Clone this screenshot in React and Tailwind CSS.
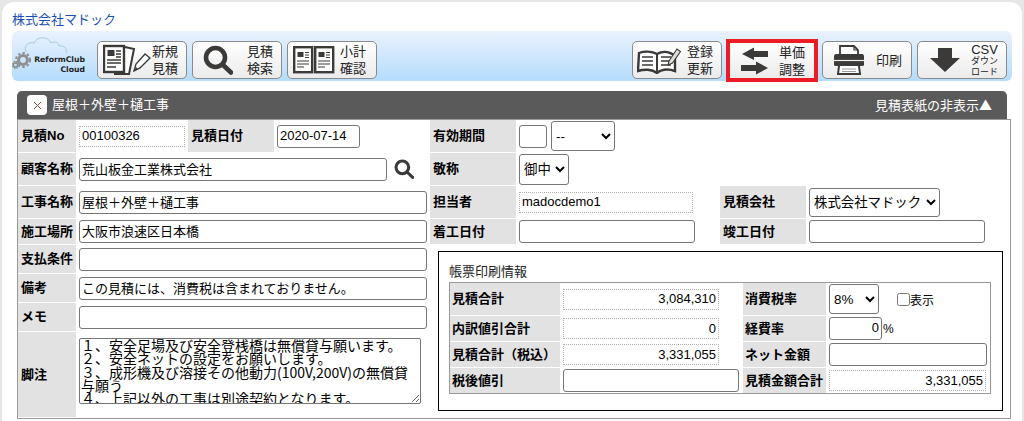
const ink = "#3b3a38";

function LogoMark() {
  return (
    <svg width="85" height="50" viewBox="0 0 85 50" className="shrink-0">
      <path d="M14 21 C11 15 17 10 22 12 C25 5 36 5 39 12 C42 10 47 11 47 15 C51 14 56 17 54 22" fill="none" stroke="#a9cbe0" strokeWidth="1" />
      <g fill="none" stroke="#8f8f8f">
        <circle cx="11" cy="29" r="4.4" strokeWidth="3" />
        <circle cx="11" cy="29" r="7" strokeWidth="2" strokeDasharray="2.4 2.2" />
        <circle cx="3.5" cy="34" r="2.2" strokeWidth="1.8" />
        <circle cx="3.5" cy="34" r="3.6" strokeWidth="1.2" strokeDasharray="1.4 1.5" />
      </g>
      <text x="73" y="30.5" textAnchor="end" fontFamily="'DejaVu Sans',sans-serif" fontWeight="700" fontSize="7.7" fill="#222">ReformClub</text>
      <text x="73" y="40.5" textAnchor="end" fontFamily="'DejaVu Sans',sans-serif" fontWeight="700" fontSize="7.7" fill="#222">Cloud</text>
    </svg>
  );
}

function DocIcon() {
  return (
    <svg width="48" height="32" viewBox="0 0 48 32" className="shrink-0">
      <path d="M22 3 L31 5 L26 30 L11 30" fill="#fff" stroke={ink} strokeWidth="2" />
      <rect x="1" y="2" width="20" height="26" fill="#fff" stroke={ink} strokeWidth="2.4" />
      <rect x="4.5" y="6" width="7" height="6" fill={ink} />
      <path d="M13 7h5M13 10h5M13 13h5M4 16h14M4 19h14M4 23h9" stroke={ink} strokeWidth="1.3" />
      <path d="M31 27 L33 20 L42 10 L47 14 L37 24 Z" fill="#fff" stroke={ink} strokeWidth="1.4" />
      <path d="M31 27 L33 23 L35 25 Z" fill={ink} />
    </svg>
  );
}

function SearchIcon({ size = 30 }) {
  return (
    <svg width={size} height={size} viewBox="0 0 30 30" className="shrink-0">
      <circle cx="12.5" cy="12.5" r="9.5" fill="none" stroke={ink} strokeWidth="4.6" />
      <path d="M19.5 19.5 L28 27.5" stroke={ink} strokeWidth="4.6" strokeLinecap="round" />
    </svg>
  );
}

function TwoDocs() {
  const page = (x) => (
    <g key={x}>
      <rect x={x + 1.2} y="1.2" width="18" height="25" fill="#fff" stroke={ink} strokeWidth="2.4" />
      <rect x={x + 4.5} y="6" width="6" height="5" fill={ink} />
      <path d={`M${x + 12} 6.5h4M${x + 12} 9h4M${x + 12} 11.5h4M${x + 4} 15h12M${x + 4} 18h12M${x + 4} 21h7`} stroke={ink} strokeWidth="1.2" />
    </g>
  );
  return (
    <svg width="42" height="28" viewBox="0 0 42 28" className="shrink-0">
      {page(0)}
      {page(21)}
    </svg>
  );
}

function BookIcon() {
  return (
    <svg width="44" height="27" viewBox="0 0 44 27" className="shrink-0">
      <path d="M20 7 C15 4 7 4 2 6 L1 24 C7 22 15 22 20 26 C25 22 32 22 38 24 L38 9 C32 4 25 4 20 7 Z" fill="#fff" stroke={ink} strokeWidth="2.4" />
      <path d="M20 7 V26" stroke={ink} strokeWidth="2" />
      <path d="M5 10h11M5 14h11M5 18h11M24 10h10M24 14h10M24 18h10" stroke={ink} strokeWidth="1.7" />
      <path d="M32 14 L40 2 L43.5 4.5 L35.5 16 L31 18 Z" fill="#ddd" stroke={ink} strokeWidth="1.1" />
    </svg>
  );
}

function ArrowsIcon() {
  return (
    <svg width="28" height="28" viewBox="0 0 28 28" className="shrink-0">
      <path d="M27 4 H13 V0.5 L1 7 L13 13 V10 H27 Z" fill={ink} />
      <path d="M0 18 H15 V14.5 L27 21 L15 27.5 V24 H0 Z" fill={ink} />
    </svg>
  );
}

function PrinterIcon() {
  return (
    <svg width="32" height="30" viewBox="0 0 32 30" className="shrink-0">
      <path d="M7 10 V1 H21 L25 5 V10 Z" fill="#fff" stroke={ink} strokeWidth="1.8" />
      <path d="M21 1 V5 H25" fill="none" stroke={ink} strokeWidth="1.2" />
      <path d="M3 9 H29 Q31 9 31 12 V20 Q31 21 29 21 H3 Q1 21 1 20 V12 Q1 9 3 9 Z" fill={ink} />
      <path d="M1 15.5 H31" stroke="#eee" strokeWidth="1.2" />
      <path d="M6 21 L5 29 H27 L26 21" fill="#fff" stroke={ink} strokeWidth="2" />
      <path d="M9 24h14M9 26.5h14" stroke="#999" strokeWidth="1.2" />
    </svg>
  );
}

function DownIcon() {
  return (
    <svg width="30" height="24" viewBox="0 0 30 24" className="shrink-0">
      <path d="M8 0 H22 V10 H30 L15 24 L0 10 H8 Z" fill={ink} />
    </svg>
  );
}

function ToolBtn({ icon, lines, children, className = "" }) {
  return (
    <div className={`h-[38px] w-[90px] shrink-0 flex items-center justify-between rounded-[5px] border border-[#8a8a8a] bg-gradient-to-b from-white to-[#ebebeb] text-[13px] leading-[17px] text-[#222] ${className}`}>
      {icon}
      {children || (
        <div className="flex flex-col items-center">
          {lines.map((l) => <span key={l}>{l}</span>)}
        </div>
      )}
    </div>
  );
}

const inputCls = "block h-[23px] shrink-0 border border-[#767676] rounded-[3px] bg-white px-[2px] pb-[2px] text-[13px] text-black outline-none";
const readCls = "block h-[21px] shrink-0 border border-dotted border-[#b0b0b0] bg-white px-[2px] pb-[1px] text-[13px] text-black outline-none";
const selCls = "block shrink-0 border border-[#767676] rounded-[3px] bg-white text-[13.4px] text-black";

function Label({ w, children, className = "" }) {
  return (
    <div className={`${w} shrink-0 self-stretch flex items-center whitespace-nowrap bg-[#e2e2e2] text-[13px] font-bold text-black ${className}`}>
      {children}
    </div>
  );
}

function Row({ h, children }) {
  return <div className={`${h} flex items-center gap-[3px]`}>{children}</div>;
}

export default function App() {
  return (
    <div className="w-[1024px] h-[421px] overflow-hidden bg-[#e6e6e6] pt-[2px] px-[2px] font-['Liberation_Sans','Noto_Sans_CJK_JP',sans-serif]">
      <div className="h-full bg-white rounded-t-[12px] pl-[10px] pr-[10px]">
        <div className="h-[29px] pt-[9px] text-[13px] leading-[18px] text-[#1a50b4]">株式会社マドック</div>

        <div className="w-[1000px] h-[50px] flex items-start rounded-[6px] bg-gradient-to-b from-[#eaf2fd] to-[#b4dcfb]">
          <LogoMark />
          <div className="flex pt-[10px] gap-[5px]">
            <ToolBtn icon={<span className="ml-[5px]"><DocIcon /></span>} lines={["新規", "見積"]} className="pr-[8px]" />
            <ToolBtn icon={<span className="ml-[10px]"><SearchIcon /></span>} lines={["見積", "検索"]} className="pr-[8px]" />
            <ToolBtn icon={<span className="ml-[5px]"><TwoDocs /></span>} lines={["小計", "確認"]} className="pr-[10px]" />
          </div>
          <div className="flex-1" />
          <div className="flex pt-[8px] items-start">
            <div className="mt-[2px] mr-[4px]">
              <ToolBtn icon={<span className="ml-[4px]"><BookIcon /></span>} lines={["登録", "更新"]} className="pr-[8px]" />
            </div>
            <div className="w-[92px] h-[43px] shrink-0 border-[4px] border-[#ed1c24] flex items-center justify-between bg-gradient-to-b from-white to-[#ebebeb] pl-[11px] pr-[9px] text-[13px] leading-[17px] text-[#222]">
              <ArrowsIcon />
              <div className="flex flex-col items-center"><span>単価</span><span>調整</span></div>
            </div>
            <div className="mt-[2px] ml-[4px] mr-[5px] flex gap-[5px]">
              <ToolBtn icon={<span className="ml-[10px]"><PrinterIcon /></span>} lines={["印刷"]} className="pr-[9px]" />
              <ToolBtn icon={<span className="ml-[12px]"><DownIcon /></span>} className="pr-[8px]">
                <div className="flex flex-col items-center">
                  <span className="text-[13px] leading-[13px]">CSV</span>
                  <span className="text-[9px] leading-[11px]">ダウン</span>
                  <span className="text-[9px] leading-[10px]">ロード</span>
                </div>
              </ToolBtn>
            </div>
          </div>
        </div>

        <div className="ml-[5px] mt-[10px] w-[990px] h-[28px] flex items-center rounded-t-[5px] bg-[#5a5a5a] text-[13px] text-white">
          <div className="ml-[10px] mr-[5px] w-[20px] h-[20px] rounded-[4px] bg-white flex items-center justify-center">
            <svg width="9" height="9" viewBox="0 0 9 9"><path d="M1 1 L8 8 M8 1 L1 8" stroke="#7a4a3a" strokeWidth="1" /></svg>
          </div>
          <span>屋根＋外壁＋樋工事</span>
          <span className="ml-auto mr-[15px]">見積表紙の非表示<span className="font-['Noto_Sans_CJK_JP',sans-serif]">▲</span></span>
        </div>

        <div className="ml-[5px] w-[994px] h-[300px] border border-[#999] flex gap-[2px] bg-white">
          <div className="w-[410px] shrink-0 flex flex-col gap-[1px]">
            <Row h="h-[32px]">
              <Label w="w-[58px]" className="pl-[3px]">見積No</Label>
              <input readOnly defaultValue="00100326" className={`${readCls} w-[106px]`} />
              <Label w="w-[86px]" className="pl-[3px]">見積日付</Label>
              <input defaultValue="2020-07-14" className={`${inputCls} w-[83px]`} />
            </Row>
            <Row h="h-[32px]">
              <Label w="w-[58px]" className="pl-[3px]">顧客名称</Label>
              <input defaultValue="荒山板金工業株式会社" className={`${inputCls} w-[308px]`} />
              <span className="ml-[4px]"><SearchIcon size={20} /></span>
            </Row>
            <Row h="h-[32px]">
              <Label w="w-[58px]" className="pl-[3px]">工事名称</Label>
              <input defaultValue="屋根＋外壁＋樋工事" className={`${inputCls} w-[348px]`} />
            </Row>
            <Row h="h-[25px]">
              <Label w="w-[58px]" className="pl-[3px]">施工場所</Label>
              <input defaultValue="大阪市浪速区日本橋" className={`${inputCls} w-[348px]`} />
            </Row>
            <Row h="h-[28px]">
              <Label w="w-[58px]" className="pl-[3px]">支払条件</Label>
              <input className={`${inputCls} w-[348px]`} />
            </Row>
            <Row h="h-[28px]">
              <Label w="w-[58px]" className="pl-[3px]">備考</Label>
              <input defaultValue="この見積には、消費税は含まれておりません。" className={`${inputCls} w-[348px]`} />
            </Row>
            <Row h="h-[28px]">
              <Label w="w-[58px]" className="pl-[3px]">メモ</Label>
              <input className={`${inputCls} w-[348px]`} />
            </Row>
            <Row h="h-[85px]">
              <Label w="w-[58px]" className="pl-[3px]">脚注</Label>
              <textarea
                className="block w-[342px] h-[66px] -mt-[7px] shrink-0 overflow-hidden border border-[#767676] rounded-[2px] bg-white px-[1px] py-0 text-[14px] leading-[13.3px] text-black outline-none font-['Liberation_Sans_Narrow','Noto_Sans_CJK_JP',sans-serif]"
                defaultValue={"１、安全足場及び安全登桟橋は無償貸与願います。\n２、安全ネットの設定をお願いします。\n３、成形機及び溶接その他動力(100V,200V)の無償貸\n与願う\n４、上記以外の工事は別途契約となります。"}
              />
            </Row>
          </div>

          <div className="flex-1 flex flex-col gap-[1px]">
            <Row h="h-[32px]">
              <Label w="w-[86px]" className="pl-[3px]">有効期間</Label>
              <input className={`${inputCls} w-[28px]`} />
              <select defaultValue="--" className={`${selCls} ml-[1px] w-[64px] h-[30px]`}><option>--</option></select>
            </Row>
            <Row h="h-[32px]">
              <Label w="w-[86px]" className="pl-[3px]">敬称</Label>
              <select className={`${selCls} w-[50px] h-[31px]`}><option>御中</option></select>
            </Row>
            <Row h="h-[32px]">
              <Label w="w-[86px]" className="pl-[3px]">担当者</Label>
              <input readOnly defaultValue="madocdemo1" className={`${readCls} w-[174px]`} />
              <Label w="w-[86px]" className="ml-[24px] pl-[3px]">見積会社</Label>
              <select className={`${selCls} w-[131px] h-[29px]`}><option>株式会社マドック</option></select>
            </Row>
            <Row h="h-[25px]">
              <Label w="w-[86px]" className="pl-[3px]">着工日付</Label>
              <input className={`${inputCls} w-[176px]`} />
              <Label w="w-[86px]" className="ml-[22px] pl-[3px]">竣工日付</Label>
              <input className={`${inputCls} w-[176px]`} />
            </Row>

            <div className="mt-[6px] ml-[8px] w-[565px] h-[160px] border border-black pl-[10px] pt-[10px]">
              <div className="h-[20px] text-[13px] leading-[20px] text-[#222]">帳票印刷情報</div>
              <div className="w-[542px] border border-[#999] flex flex-col gap-[1px]">
                <div className="h-[32px] flex items-center">
                  <Label w="w-[110px]" className="pl-[2px]">見積合計</Label>
                  <div className="w-[183px] shrink-0 pl-[3px]"><input readOnly defaultValue="3,084,310" className={`${readCls} w-[156px] text-right`} /></div>
                  <Label w="w-[83px]" className="pl-[2px]">消費税率</Label>
                  <select className={`${selCls} ml-[3px] w-[50px] h-[30px]`}><option>8%</option></select>
                  <input type="checkbox" className="ml-[18px] w-[13px] h-[13px] shrink-0" />
                  <span className="text-[12px] pt-[3px]">表示</span>
                </div>
                <div className="h-[25px] flex items-center">
                  <Label w="w-[110px]" className="pl-[2px]">内訳値引合計</Label>
                  <div className="w-[183px] shrink-0 pl-[3px]"><input readOnly defaultValue="0" className={`${readCls} w-[156px] text-right`} /></div>
                  <Label w="w-[83px]" className="pl-[2px]">経費率</Label>
                  <input defaultValue="0" className={`${inputCls} ml-[3px] w-[53px] text-right`} />
                  <span className="ml-[1px] text-[12px]">%</span>
                </div>
                <div className="h-[25px] flex items-center">
                  <Label w="w-[110px]" className="pl-[2px]">見積合計（税込）</Label>
                  <div className="w-[183px] shrink-0 pl-[3px]"><input readOnly defaultValue="3,331,055" className={`${readCls} w-[156px] text-right`} /></div>
                  <Label w="w-[83px]" className="pl-[2px]">ネット金額</Label>
                  <input className={`${inputCls} ml-[3px] w-[158px]`} />
                </div>
                <div className="h-[25px] flex items-center">
                  <Label w="w-[110px]" className="pl-[2px]">税後値引</Label>
                  <div className="w-[183px] shrink-0 pl-[3px]"><input className={`${inputCls} w-[176px]`} /></div>
                  <Label w="w-[83px]" className="pl-[2px]">見積金額合計</Label>
                  <input readOnly defaultValue="3,331,055" className={`${readCls} ml-[3px] w-[157px] text-right`} />
                </div>
              </div>
            </div>
          </div>
        </div>
      </div>
    </div>
  );
}
